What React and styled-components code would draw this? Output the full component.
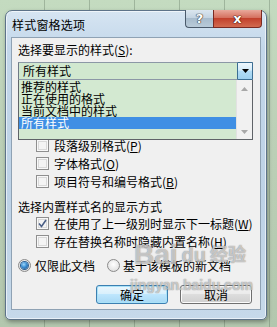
import React from "react";
import styled, { createGlobalStyle } from "styled-components";

const Global = createGlobalStyle`
  html, body { margin: 0; padding: 0; }
  body { font-family: "Noto Sans CJK SC", "Noto Sans", sans-serif; }
`;

const Page = styled.div`
  position: relative;
  width: 277px;
  height: 327px;
  overflow: hidden;
  box-sizing: border-box;
  padding: 10px 0 0 5px;
  background:
    repeating-linear-gradient(90deg, transparent 0 44px, rgba(90,110,90,0.35) 44px 45px),
    linear-gradient(180deg, #c4dbc0 0%, #bcd0b7 40%, #b3c7ae 100%);
`;

const Dialog = styled.div`
  width: 262px;
  height: 310px;
  box-sizing: border-box;
  border: 1px solid #5d7389;
  border-radius: 7px 7px 5px 5px;
  padding: 0 5px 9px 5px;
  background: linear-gradient(180deg, #d6e5f2 0%, #c3d7ea 12%, #bdd2e6 60%, #c6d9ea 100%);
  box-shadow: 1px 2px 4px rgba(0,0,0,0.35), inset 0 0 0 1px rgba(255,255,255,0.6);
  display: flex;
  flex-direction: column;
`;

const TitleBar = styled.div`
  height: 26px;
  display: flex;
  align-items: center;
  padding-left: 1px;
`;

const Title = styled.div`
  font-size: 12px;
  color: #000;
  letter-spacing: 0.2px;
  padding-top: 1px;
`;

const Caption = styled.div`
  margin-left: auto;
  align-self: flex-start;
  margin-top: -1px;
  margin-right: -1px;
  display: flex;
`;

const CapBtn = styled.div`
  height: 18px;
  box-sizing: border-box;
  display: flex;
  align-items: center;
  justify-content: center;
  color: #fff;
  font-family: "DejaVu Sans", sans-serif;
  font-weight: bold;
  border: 1px solid #4a5a6b;
  border-top: none;
`;

const HelpBtn = styled(CapBtn)`
  width: 28px;
  border-radius: 0 0 0 4px;
  border-right: none;
  font-size: 13px;
  background: linear-gradient(180deg, #dbe6ef 0%, #c4d4e2 45%, #a8bccd 50%, #b9cbd9 100%);
  text-shadow: 0 0 1px #333, 0 0 1px #333, 0 0 1px #333;
`;

const CloseBtn = styled(CapBtn)`
  width: 49px;
  border-radius: 0 0 4px 0;
  border-color: #7a2a22;
  font-size: 13px;
  background: linear-gradient(180deg, #e9a99b 0%, #d5715f 45%, #c2412c 50%, #d26a4f 100%);
  text-shadow: 0 0 1px #3a0a05, 0 0 1px #3a0a05, 0 0 1px #3a0a05;
`;

const Client = styled.div`
  flex: 1;
  box-sizing: border-box;
  background: #f0f0f0;
  border: 1px solid #8fa2b4;
  padding: 5px 7px 0 6px;
  display: flex;
  flex-direction: column;
  font-size: 12px;
  color: #000;
`;

const Label = styled.div`
  line-height: 14px;
  height: 14px;
  white-space: nowrap;
  margin-top: ${(p) => p.$mt || 0}px;
`;

const ComboWrap = styled.div`
  position: relative;
  margin-top: 5px;
`;

const Combo = styled.div`
  height: 18px;
  box-sizing: border-box;
  border: 1px solid #8c98a6;
  border-left-color: #6f7a87;
  background: #d1e8cf;
  display: flex;
  align-items: center;
`;

const ComboText = styled.div`
  flex: 1;
  padding-left: 4px;
  line-height: 16px;
`;

const DropBtn = styled.div`
  width: 16px;
  height: 18px;
  margin: -1px -1px -1px 0;
  box-sizing: border-box;
  border: 1px solid #3c6e93;
  border-radius: 1px;
  background: linear-gradient(180deg, #eef7fd 0%, #d4ebf9 45%, #b2dcf5 50%, #9fd1ef 100%);
  display: flex;
  align-items: center;
  justify-content: center;
`;

const ListBox = styled.div`
  position: absolute;
  top: 100%;
  left: 0;
  width: 235px;
  height: 60px;
  box-sizing: border-box;
  border: 1px solid #5f6368;
  border-top: none;
  background: #d3e9d1;
  display: flex;
  z-index: 2;
`;

const Items = styled.div`
  flex: 1;
  padding-top: 1px;
`;

const Item = styled.div`
  height: 12px;
  line-height: 11px;
  padding-left: 2px;
  white-space: nowrap;
  color: ${(p) => (p.$sel ? "#fff" : "#000")};
  background: ${(p) => (p.$sel ? "#3f8fe4" : "transparent")};
`;

const ScrollBar = styled.div`
  width: 16px;
  background: #f1f1f1;
  border-left: 1px solid #e2e2e2;
  display: flex;
  flex-direction: column;
  justify-content: space-between;
  align-items: center;
  padding: 7px 0 5px;
  box-sizing: border-box;
`;

const Spacer = styled.div`
  height: ${(p) => p.$h}px;
`;

const Row = styled.div`
  height: 18px;
  display: flex;
  align-items: center;
  padding-left: ${(p) => p.$indent || 0}px;
  gap: ${(p) => p.$gap || 5}px;
  white-space: nowrap;
  margin-top: ${(p) => p.$mt || 0}px;
`;

const Box = styled.div`
  width: 13px;
  height: 13px;
  box-sizing: border-box;
  border: 1px solid #8f8f8f;
  background: #f4f4f4;
  box-shadow: inset 0 0 0 1px #f8f8f8, inset 0 0 0 2px #d9d9d9;
  display: flex;
  align-items: center;
  justify-content: center;
  flex: none;
`;

const Radio = styled.div`
  width: 13px;
  height: 13px;
  box-sizing: border-box;
  border-radius: 50%;
  border: 1px solid #8a8a8a;
  background: radial-gradient(circle at 50% 40%, #ffffff 0%, #e4e4e4 70%, #cfcfcf 100%);
  display: flex;
  align-items: center;
  justify-content: center;
  flex: none;
`;

const Dot = styled.div`
  width: 7px;
  height: 7px;
  border-radius: 50%;
  background: radial-gradient(circle at 40% 35%, #9fd8fb 0%, #3a8ed3 45%, #1c4f86 100%);
  box-shadow: 0 0 0 1px #2d5f8f;
`;

const RadioItem = styled.div`
  display: flex;
  align-items: center;
  gap: ${(p) => p.$gap}px;
`;

const ButtonRow = styled.div`
  display: flex;
  justify-content: flex-end;
  gap: 12px;
  margin-top: 11px;
  padding-right: 1px;
`;

const Button = styled.div`
  width: 72px;
  height: 19px;
  box-sizing: border-box;
  border-radius: 3px;
  border: 1px solid ${(p) => (p.$default ? "#3c7fb1" : "#707070")};
  background: ${(p) =>
    p.$default
      ? "linear-gradient(180deg, #eaf6fd 0%, #d9f0fc 45%, #bee6fd 50%, #a7d9f5 100%)"
      : "linear-gradient(180deg, #f2f2f2 0%, #ebebeb 45%, #dddddd 50%, #cfcfcf 100%)"};
  box-shadow: inset 0 0 0 1px ${(p) => (p.$default ? "#a9e2f8" : "#fbfbfb")};
  display: flex;
  align-items: center;
  justify-content: center;
  line-height: 17px;
`;

const Watermark = styled.div`
  position: absolute;
  left: 134px;
  top: 240px;
  width: 124px;
  pointer-events: none;
  color: rgba(255, 255, 255, 0.55);
  text-shadow: 0 0 1px rgba(90, 90, 90, 0.5), 0 0 1px rgba(90, 90, 90, 0.5);
  font-family: "Liberation Sans", "Noto Sans CJK SC", sans-serif;
  font-weight: bold;
  z-index: 5;
  display: flex;
  flex-direction: column;
  align-items: flex-start;
`;

const WmLogo = styled.div`
  display: flex;
  align-items: center;
  gap: 4px;
  height: 30px;
  white-space: nowrap;
`;

const WmPart = styled.span`
  font-size: ${(p) => p.$size}px;
  line-height: 30px;
`;

const WmUrl = styled.div`
  font-size: 14px;
  line-height: 16px;
  margin-top: 7px;
  margin-left: -4px;
  white-space: nowrap;
`;

const Check = () => (
  <svg width="9" height="9" viewBox="0 0 9 9">
    <path d="M1 4.5 L3.5 7.5 L8 1" fill="none" stroke="#4b5f86" strokeWidth="1.6" />
  </svg>
);

const Tri = ({ up, color = "#000" }) => (
  <svg width="7" height="4" viewBox="0 0 7 4">
    <path d={up ? "M0 4 L3.5 0 L7 4 Z" : "M0 0 L7 0 L3.5 4 Z"} fill={color} />
  </svg>
);

const CheckRow = ({ checked, children, mt }) => (
  <Row $indent={18} $gap={5} $mt={mt}>
    <Box>{checked && <Check />}</Box>
    <span>{children}</span>
  </Row>
);

export default function App() {
  return (
    <>
      <Global />
      <Page>
        <Dialog>
          <TitleBar>
            <Title>样式窗格选项</Title>
            <Caption>
              <HelpBtn>?</HelpBtn>
              <CloseBtn>x</CloseBtn>
            </Caption>
          </TitleBar>
          <Client>
            <Label>
              选择要显示的样式(<u>S</u>):
            </Label>
            <ComboWrap>
              <Combo>
                <ComboText>所有样式</ComboText>
                <DropBtn>
                  <Tri />
                </DropBtn>
              </Combo>
              <ListBox>
                <Items>
                  <Item>推荐的样式</Item>
                  <Item>正在使用的格式</Item>
                  <Item>当前文档中的样式</Item>
                  <Item $sel>所有样式</Item>
                </Items>
                <ScrollBar>
                  <Tri up color="#a8a8a8" />
                  <Tri color="#a8a8a8" />
                </ScrollBar>
              </ListBox>
            </ComboWrap>
            <Spacer $h={56} />
            <CheckRow>
              段落级别格式(<u>P</u>)
            </CheckRow>
            <CheckRow>
              字体格式(<u>O</u>)
            </CheckRow>
            <CheckRow>
              项目符号和编号格式(<u>B</u>)
            </CheckRow>
            <Label $mt={10}>选择内置样式名的显示方式</Label>
            <CheckRow checked>
              在使用了上一级别时显示下一标题(<u>W</u>)
            </CheckRow>
            <CheckRow>
              存在替换名称时隐藏内置名称(<u>H</u>)
            </CheckRow>
            <Row $gap={12} $mt={6}>
              <RadioItem $gap={4}>
                <Radio>
                  <Dot />
                </Radio>
                <span>仅限此文档</span>
              </RadioItem>
              <RadioItem $gap={3}>
                <Radio />
                <span>基于该模板的新文档</span>
              </RadioItem>
            </Row>
            <ButtonRow>
              <Button $default>确定</Button>
              <Button>取消</Button>
            </ButtonRow>
          </Client>
        </Dialog>
        <Watermark>
          <WmLogo>
            <WmPart $size={28}>Bai</WmPart>
            <WmPart $size={20}>du</WmPart>
            <WmPart $size={18}>经验</WmPart>
          </WmLogo>
          <WmUrl>jingyan.baidu.com</WmUrl>
        </Watermark>
      </Page>
    </>
  );
}
